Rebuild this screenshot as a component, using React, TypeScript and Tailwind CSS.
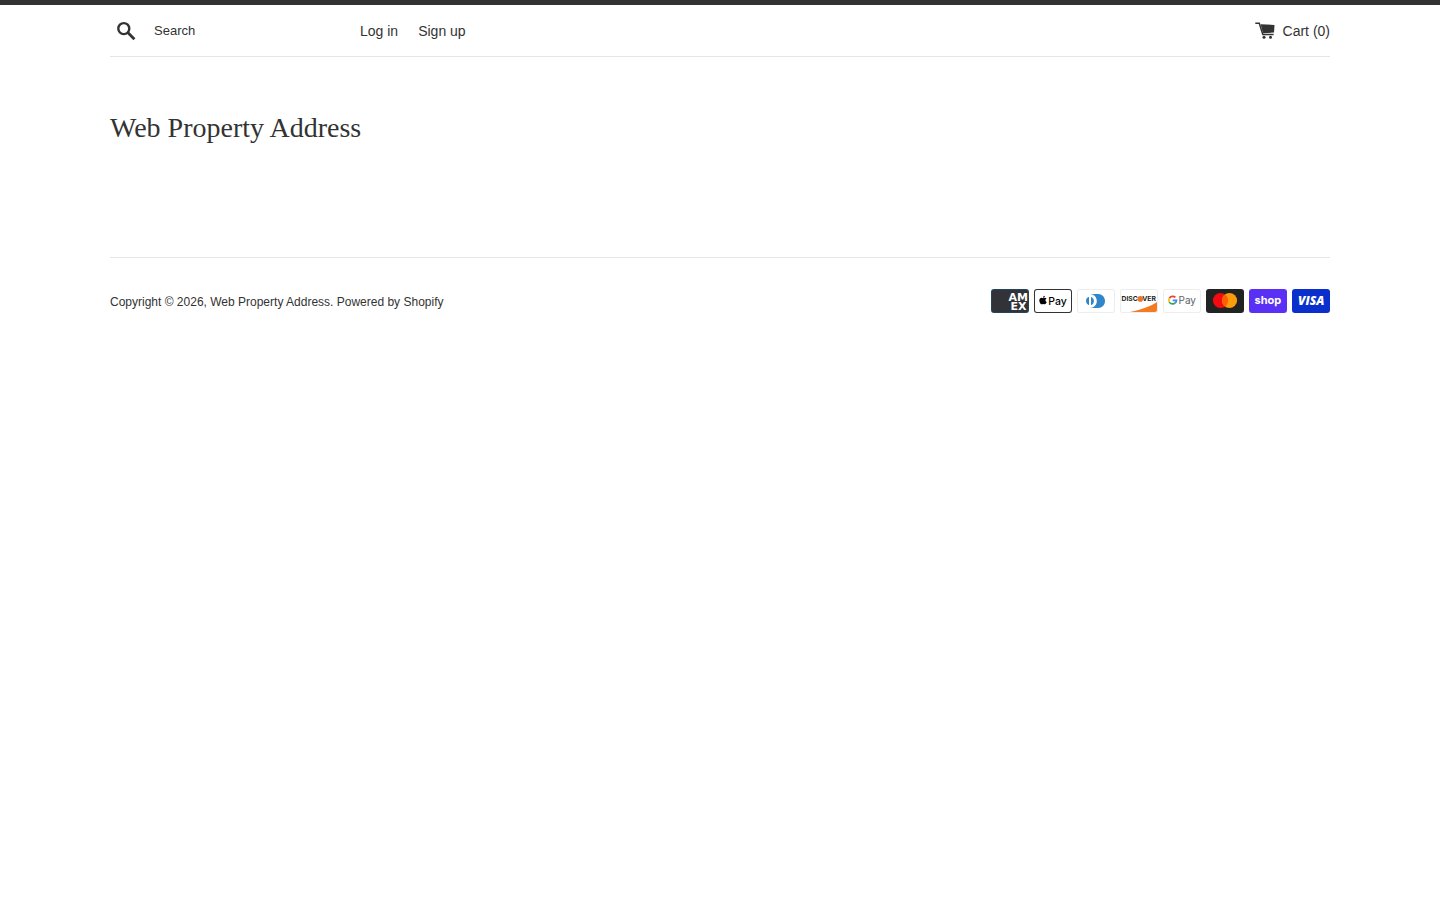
import React from "react";
import { FaApple } from "react-icons/fa";

interface CardProps {
    label: string;
    fill: string;
    border?: string;
    children: React.ReactNode;
}

const Card = ({ label, fill, border, children }: CardProps) => (
    <li>
        <svg className="block h-6 w-[38px]" viewBox="0 0 38 24" role="img" aria-label={label}>
            <rect width="38" height="24" rx="3" fill={border ?? fill} />
            <rect x="1" y="1" width="36" height="22" rx="2" fill={fill} />
            {children}
        </svg>
    </li>
);

const SearchIcon = () => (
    <svg className="h-5 w-5" viewBox="0 0 20 20" fill="none" stroke="#333" aria-hidden="true">
        <circle cx="7.8" cy="7.6" r="5.5" strokeWidth="2.4" />
        <path d="M11.8 11.6l6.6 6.6" strokeWidth="2.8" />
    </svg>
);

const CartIcon = () => (
    <svg className="h-5 w-5" viewBox="0 1 20 20" fill="#333" aria-hidden="true">
        <path d="M5.6 4.2l13.9.8-.5 7.6-11 .6z" />
        <path d="M.3 3.3h4l3.5 11.3h10.800" fill="none" stroke="#333" strokeWidth="1.5" />
        <circle cx="9" cy="17.2" r="1.5" />
        <circle cx="15.5" cy="17.2" r="1.5" />
    </svg>
);

const PaymentIcons = () => (
    <ul className="flex flex-wrap gap-[5px]" aria-label="Payment methods">
        <Card label="American Express" fill="#323338" border="#24465d">
            <text fill="#fff" fontFamily="DejaVu Sans, sans-serif" fontWeight="700" fontSize="11">
                <tspan x="17.5" y="11.5">AM</tspan>
                <tspan x="19.5" y="21">EX</tspan>
            </text>
        </Card>
        <Card label="Apple Pay" fill="#fff" border="#333">
            <FaApple x="4" y="6" size={10} color="#000" />
            <text x="14.3" y="15.5" fontFamily="Inter, sans-serif" fontWeight="500" fontSize="10.5">Pay</text>
        </Card>
        <Card label="Diners Club" fill="#fff" border="#ededed">
            <path
                d="M12 12v3.7c0 .3-.2.3-.5.2-1.9-.8-3-3.3-2.3-5.4.4-1.1 1.2-2 2.3-2.4.4-.2.5-.1.5.2V12zm2 0V8.3c0-.3 0-.3.3-.2 2.1.8 3.2 3.3 2.4 5.4-.4 1.1-1.2 2-2.3 2.4-.4.2-.4.1-.4-.2V12zm7.2-7H13c3.8 0 6.8 3.1 6.8 7s-3 7-6.8 7h8.2c3.8 0 6.8-3.1 6.8-7s-3-7-6.8-7z"
                fill="#3086c8"
            />
        </Card>
        <Card label="Discover" fill="#fff" border="#ededed">
            <path d="M37 13c-6 4-15 7.5-27 10h25a2 2 0 0 0 2-2z" fill="#f47b20" />
            <g fill="#231f20" fontFamily="Inter, sans-serif" fontWeight="700" fontSize="6.8">
                <text x="1.5" y="12.3">DISC</text>
                <text x="22.3" y="12.3">VER</text>
            </g>
            <circle cx="20.3" cy="9.9" r="2.8" fill="#e9762b" />
        </Card>
        <Card label="Google Pay" fill="#fff" border="#ededed">
            <g fill="none" strokeWidth="1.7">
                <path d="M6.3 9.3A3.9 3.9 0 0 1 12.4 8.4" stroke="#ea4335" />
                <path d="M6.3 9.3a3.9 3.9 0 0 0 0 3.8" stroke="#fbbc04" />
                <path d="M6.3 13.1a3.9 3.9 0 0 0 6 .8" stroke="#34a853" />
                <path d="M12.3 13.9a3.9 3.9 0 0 0 1.2-2.5H9.7" stroke="#4285f4" />
            </g>
            <text x="15.5" y="15" fill="#5f6368" fontFamily="Inter, sans-serif" fontSize="10">Pay</text>
        </Card>
        <Card label="Mastercard" fill="#212322">
            <circle cx="14.5" cy="11.5" r="7.6" fill="#f50a0f" />
            <circle cx="23.5" cy="11.5" r="7.6" fill="#fb9c0c" />
            <path d="M19 5.4a7.6 7.6 0 0 1 0 12.2a7.6 7.6 0 0 1 0-12.2z" fill="#ff5f00" />
        </Card>
        <Card label="Shop Pay" fill="#5a31f4">
            <text x="5.5" y="15" fill="#fff" fontFamily="Inter, sans-serif" fontWeight="700" fontSize="11">shop</text>
        </Card>
        <Card label="Visa" fill="#0a2fcc">
            <text x="6" y="16" fill="#fff" fontFamily="Open Sans, sans-serif" fontStyle="italic" fontWeight="800" fontSize="12">VISA</text>
        </Card>
    </ul>
);

export default function App() {
    return (
        <div className="min-h-screen border-t-[5px] border-[#333] bg-white font-['Liberation_Sans',Arial,sans-serif] text-[#333]">
            <div className="mx-auto max-w-[1280px] px-[30px]">
                <header className="flex items-center border-b border-[#e6e6e6] py-2">
                    <form className="flex w-[250px] items-center" role="search" onSubmit={(e) => e.preventDefault()}>
                        <button type="submit" aria-label="Search" className="flex h-[35px] w-8 items-center justify-center">
                            <SearchIcon />
                        </button>
                        <input
                            type="search"
                            placeholder="Search"
                            aria-label="Search"
                            className="h-[35px] w-[180px] bg-transparent px-3 text-[13px] outline-none placeholder:text-[#333]"
                        />
                    </form>
                    <nav className="flex gap-5 text-[14px] leading-5">
                        <a href="#login">Log in</a>
                        <a href="#signup">Sign up</a>
                    </nav>
                    <a href="#cart" className="ml-auto flex items-center gap-2 text-[14px] leading-5">
                        <CartIcon />
                        Cart (0)
                    </a>
                </header>

                <main className="pt-[55px] pb-[113px]">
                    <h1 className="font-['Liberation_Serif',serif] text-[28px] leading-8">Web Property Address</h1>
                </main>

                <footer className="flex flex-wrap items-end justify-between gap-4 border-t border-[#e6e6e6] py-[31px]">
                    <p className="text-[12px] leading-[22px]">
                        Copyright © 2026, <a href="#home">Web Property Address</a>. <a href="#shopify">Powered by Shopify</a>
                    </p>
                    <PaymentIcons />
                </footer>
            </div>
        </div>
    );
}
